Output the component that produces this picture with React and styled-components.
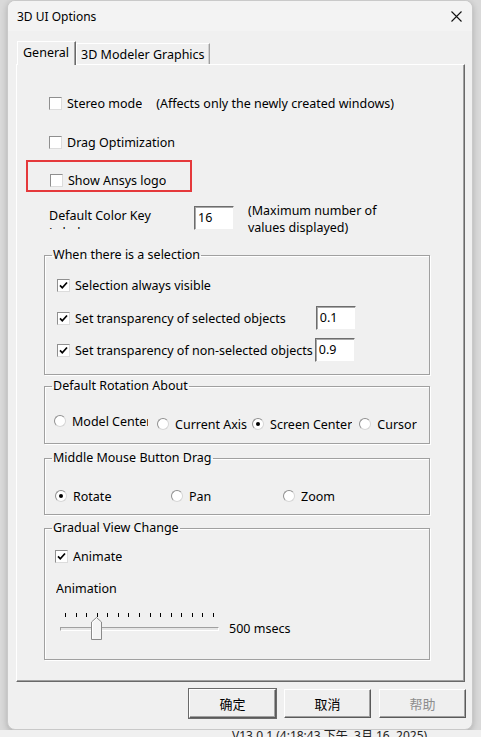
import React from 'react'
import styled, { createGlobalStyle } from 'styled-components'

const GlobalStyle = createGlobalStyle`
  html, body {
    margin: 0;
    padding: 0;
  }
  body {
    font-family: 'Noto Sans', 'Noto Sans CJK SC', sans-serif;
    font-size: 12px;
    color: #000;
  }
`

const Page = styled.div`
  width: 481px;
  height: 737px;
  overflow: hidden;
  display: grid;
  grid-template-columns: 7px 466px 1fr;
  grid-template-rows: 730px 1fr;
  background: #d9d9d9;
`

const Backdrop = styled.div`
  grid-column: 1 / 4;
  grid-row: 2;
  background: #f0f0f0;
  padding-left: 232px;
  font-size: 12px;
  line-height: 12px;
  color: #222;
  white-space: nowrap;
  overflow: hidden;
`

const Dialog = styled.div`
  grid-column: 2;
  grid-row: 1;
  display: flex;
  flex-direction: column;
  background: #f0f0f0;
  border: 1px solid #c9c9c9;
  border-radius: 8px;
  box-shadow: 0 2px 6px rgba(0, 0, 0, 0.2);
  overflow: hidden;
`

const TitleBar = styled.div`
  height: 30px;
  display: flex;
  align-items: center;
  justify-content: space-between;
  padding: 0 10px 0 9px;
  background: #f3f3f3;
  font-size: 12px;
`

const Body = styled.div`
  flex: 1;
  display: flex;
  flex-direction: column;
  padding: 10px 7px 0 8px;
`

const TabRow = styled.div`
  display: flex;
  align-items: flex-end;
  height: 24px;
  margin-left: 1px;
  position: relative;
  z-index: 1;
  margin-bottom: -1px;
`

const Tab = styled.div`
  box-sizing: border-box;
  height: ${p => (p.active ? 24 : 21)}px;
  margin-bottom: ${p => (p.active ? 0 : 1)}px;
  padding: ${p => (p.active ? '2px 6px 0 5px' : '2px 4px 0 4px')};
  background: #f0f0f0;
  border-top: 1px solid #fff;
  border-left: 1px solid #fff;
  border-right: 1px solid ${p => (p.active ? '#696969' : '#a0a0a0')};
  box-shadow: ${p => (p.active ? 'inset -1px 0 0 #a0a0a0' : 'inset -1px 0 0 #d0d0d0')};
  font-size: 12.5px;
  line-height: 18px;
`

const Panel = styled.div`
  box-sizing: border-box;
  height: 618px;
  display: flex;
  flex-direction: column;
  border-top: 1px solid #fff;
  border-left: 1px solid #fff;
  border-right: 1px solid #696969;
  border-bottom: 1px solid #696969;
  box-shadow: inset -1px -1px 0 #a0a0a0;
  padding: 0 0 0 27px;
`

const Row = styled.div`
  display: flex;
  align-items: center;
  height: ${p => p.h || 20}px;
  margin-top: ${p => p.mt || 0}px;
  margin-left: ${p => p.ml || 0}px;
`

const Label = styled.span`
  font-size: 12.5px;
  white-space: nowrap;
  margin-left: ${p => p.ml || 0}px;
  width: ${p => (p.w ? `${p.w}px` : 'auto')};
  overflow: hidden;
  color: ${p => (p.muted ? '#888' : '#000')};
`

const Highlight = styled.div`
  box-sizing: border-box;
  width: 166px;
  height: 32px;
  margin: 8px 0 0 -18px;
  padding: 8px 0 0 22px;
  border: 2px solid #e5393b;
`

const Box = styled.span`
  box-sizing: border-box;
  width: 13px;
  height: 13px;
  flex: none;
  display: inline-flex;
  align-items: center;
  justify-content: center;
  background: #fff;
  border: 1px solid #8f8f8f;
  border-right-color: #dcdcdc;
  border-bottom-color: #dcdcdc;
`

const Round = styled.span`
  box-sizing: border-box;
  width: 12px;
  height: 12px;
  flex: none;
  display: inline-flex;
  align-items: center;
  justify-content: center;
  border-radius: 50%;
  background: #fff;
  border: 1px solid #8f8f8f;
  border-right-color: #d6d6d6;
  border-bottom-color: #d6d6d6;
`

const Dot = styled.span`
  width: 4px;
  height: 4px;
  border-radius: 50%;
  background: #000;
`

const Check = ({ checked, label, gap = 5 }) => (
  <>
    <Box>
      {checked && (
        <svg width="11" height="11" viewBox="0 0 11 11">
          <path d="M2 5.3 L4.3 7.8 L9 2.5" fill="none" stroke="#000" strokeWidth="1.7" />
        </svg>
      )}
    </Box>
    <Label ml={gap}>{label}</Label>
  </>
)

const Radio = ({ checked, label, w, gap = 6 }) => (
  <>
    <Round>{checked && <Dot />}</Round>
    <Label ml={gap} w={w}>
      {label}
    </Label>
  </>
)

const ColorKey = styled.div`
  display: flex;
  align-items: flex-start;
  margin: 14px 0 0 5px;
  height: 24px;
`

const KeyLabel = styled.div`
  width: 112px;
  height: 22px;
  margin-top: 1px;
  overflow: hidden;
  font-size: 12.5px;
  line-height: 17px;
`

const KeyNote = styled.div`
  margin: -4px 0 0 14px;
  font-size: 12.5px;
  line-height: 17px;
`

const Field = styled.div`
  box-sizing: border-box;
  width: ${p => p.w || 40}px;
  height: 24px;
  padding: 2px 3px;
  background: #fff;
  border: 1px solid #f0f0f0;
  border-top-color: #6d6d6d;
  border-left-color: #6d6d6d;
  box-shadow: inset 1px 1px 0 #a8a8a8;
  font-size: 12.5px;
  line-height: 18px;
  margin-left: ${p => p.ml || 0}px;
`

const Group = styled.fieldset`
  box-sizing: border-box;
  width: 386px;
  height: ${p => p.h}px;
  margin: ${p => p.mt}px 0 0 0;
  padding: 0;
  min-width: 0;
  border: 1px solid #a0a0a0;
  box-shadow: 1px 1px 0 #fff, inset 1px 1px 0 #fff;
  display: flex;
  flex-direction: column;
`

const GroupBody = styled.div`
  display: flex;
  flex-direction: column;
  padding-left: ${p => p.pl || 10}px;
`

const Legend = styled.legend`
  padding: 0 1px;
  margin-left: 7px;
  font-size: 12.5px;
  line-height: 16px;
`

const SliderWrap = styled.div`
  display: flex;
  align-items: flex-end;
  margin-top: 15px;
  margin-left: 5px;
`

const Slider = styled.div`
  width: 159px;
  display: flex;
  flex-direction: column;
`

const Ticks = styled.div`
  display: flex;
  justify-content: space-between;
  padding: 0 5px;
  height: 5px;
`

const Tick = styled.span`
  width: 1px;
  height: 4px;
  background: #000;
`

const Track = styled.div`
  position: relative;
  height: 23px;
  margin-top: -1px;
  display: flex;
  align-items: center;
`

const Rail = styled.div`
  box-sizing: border-box;
  width: 100%;
  height: 4px;
  border: 1px solid #a0a0a0;
  border-right-color: #fff;
  border-bottom-color: #fff;
  background: #e6e6e6;
`

const Thumb = styled.svg`
  position: absolute;
  left: 31px;
  top: 0;
`

const SliderValue = styled.span`
  font-size: 12.5px;
  margin: 0 0 3px 10px;
`

const ButtonRow = styled.div`
  display: flex;
  justify-content: flex-end;
  gap: 8px;
  padding: 7px 0 0 0;
  margin-right: -1px;
`

const Button = styled.div`
  box-sizing: border-box;
  width: 87px;
  height: 29px;
  display: flex;
  align-items: center;
  justify-content: center;
  background: #efefef;
  border: 1px solid #fff;
  border-right-color: #5a5a5a;
  border-bottom-color: #5a5a5a;
  box-shadow: inset -1px -1px 0 #a0a0a0, 0 0 0 1px ${p => (p.primary ? '#6a6a6a' : 'transparent')};
  font-family: 'Noto Sans CJK SC', sans-serif;
  font-size: 13px;
  color: ${p => (p.disabled ? '#8d8d8d' : '#000')};
`

const App = () => (
  <Page>
    <GlobalStyle />
    <div />
    <Dialog>
      <TitleBar>
        <span>3D UI Options</span>
        <svg width="11" height="11" viewBox="0 0 11 11">
          <path d="M0.5 0.5 L10.5 10.5 M10.5 0.5 L0.5 10.5" stroke="#111" strokeWidth="1.1" />
        </svg>
      </TitleBar>
      <Body>
        <TabRow>
          <Tab active>General</Tab>
          <Tab>3D Modeler Graphics</Tab>
        </TabRow>
        <Panel>
          <Row mt={28} ml={5}>
            <Check label="Stereo mode" />
            <Label ml={14}>(Affects only the newly created windows)</Label>
          </Row>
          <Row mt={19} ml={5}>
            <Check label="Drag Optimization" />
          </Row>
          <Highlight>
            <Row>
              <Check label="Show Ansys logo" />
            </Row>
          </Highlight>
          <ColorKey>
            <KeyLabel>Default Color Key Label</KeyLabel>
            <Field ml={33}>16</Field>
            <KeyNote>
              (Maximum number of
              <br />
              values displayed)
            </KeyNote>
          </ColorKey>
          <Group h={128} mt={17}>
            <Legend>When there is a selection</Legend>
            <GroupBody pl={12}>
              <Row mt={12}>
                <Check checked label="Selection always visible" />
              </Row>
              <Row h={24} mt={11}>
                <Check checked label="Set transparency of selected objects" />
                <Field ml={30}>0.1</Field>
              </Row>
              <Row h={24} mt={8}>
                <Check checked label="Set transparency of non-selected objects" />
                <Field ml={2}>0.9</Field>
              </Row>
            </GroupBody>
          </Group>
          <Group h={66} mt={3}>
            <Legend>Default Rotation About</Legend>
            <GroupBody pl={9}>
              <Row mt={17}>
                <Radio label="Model Center" w={76} />
                <Row mt={6} ml={9}>
                  <Radio label="Current Axis" />
                </Row>
                <Row mt={6} ml={5}>
                  <Radio checked label="Screen Center" />
                </Row>
                <Row mt={6} ml={7}>
                  <Radio label="Cursor" />
                </Row>
              </Row>
            </GroupBody>
          </Group>
          <Group h={65} mt={6}>
            <Legend>Middle Mouse Button Drag</Legend>
            <GroupBody pl={10}>
              <Row mt={20}>
                <Radio checked label="Rotate" w={98} />
                <Radio label="Pan" w={94} />
                <Radio label="Zoom" />
              </Row>
            </GroupBody>
          </Group>
          <Group h={140} mt={5}>
            <Legend>Gradual View Change</Legend>
            <GroupBody pl={10}>
              <Row mt={10}>
                <Check checked label="Animate" />
              </Row>
              <Row mt={12} ml={1}>
                <Label>Animation</Label>
              </Row>
              <SliderWrap>
                <Slider>
                  <Ticks>
                    {Array.from({ length: 15 }).map((_, i) => (
                      <Tick key={i} />
                    ))}
                  </Ticks>
                  <Track>
                    <Rail />
                    <Thumb width="11" height="23" viewBox="0 0 11 23">
                      <path d="M0.5 22.5 V5 L5.5 0.5 L10.5 5 V22.5 Z" fill="#f4f4f4" stroke="#8a8a8a" />
                      <path d="M1.5 21.5 V5.4 L5.5 1.8" fill="none" stroke="#fff" />
                    </Thumb>
                  </Track>
                </Slider>
                <SliderValue>500 msecs</SliderValue>
              </SliderWrap>
            </GroupBody>
          </Group>
        </Panel>
        <ButtonRow>
          <Button primary>确定</Button>
          <Button>取消</Button>
          <Button disabled>帮助</Button>
        </ButtonRow>
      </Body>
    </Dialog>
    <div />
    <Backdrop>V13.0.1 (4:18:43 下午, 3月 16, 2025)</Backdrop>
  </Page>
)

export default App
